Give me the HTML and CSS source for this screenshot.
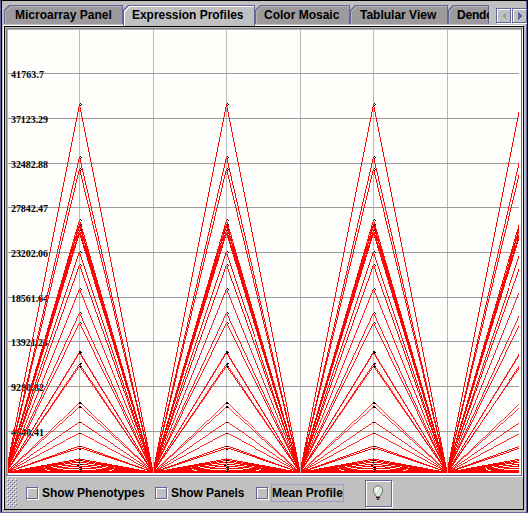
FILE: index.html
```
<!DOCTYPE html>
<html lang="en">
<head>
<meta charset="utf-8">
<title>Expression Profiles</title>
<link rel="stylesheet" href="styles.css">
</head>
<body>
<main class="window">
  <nav class="tabs">
    <button class="tab t1"><span>Microarray Panel</span></button>
    <button class="tab t2 active"><span>Expression Profiles</span></button>
    <button class="tab t3"><span>Color Mosaic</span></button>
    <button class="tab t4"><span>Tablular View</span></button>
    <button class="tab t5"><span>Dendc</span></button>
    <div class="scrolls">
      <button class="scroll" aria-label="Previous"><svg width="13" height="13" shape-rendering="crispEdges"><path d="M9 3V11L5 7Z" fill="#9c9a9c"/></svg></button>
      <button class="scroll" aria-label="Next"><svg width="13" height="13" shape-rendering="crispEdges"><path d="M5 3V11L9 7Z" fill="#63659c"/></svg></button>
    </div>
  </nav>
  <section class="panel">
    <div class="chart">
      <svg width="511" height="443" viewBox="8 30 511 443" shape-rendering="crispEdges">
        <defs>
          <pattern id="stripes" x="0" y="1" width="8" height="4" patternUnits="userSpaceOnUse">
            <path d="M0 .5H8" stroke="#fffbf0"/>
          </pattern>
          <g id="profiles">
            <g fill="none" stroke="#f00">
              <path stroke-width=".97" d="M6 472.500L79.500 104L153 472.500M6 472.500L79.500 157L153 472.500M6 472.500L79.500 169L153 472.500M6 472.500L79.500 220L153 472.500M6 472.500L79.500 224L153 472.500M6 472.500L79.500 226L153 472.500M6 472.500L79.500 230L153 472.500M6 472.500L79.500 233L153 472.500M6 472.500L79.500 252L153 472.500M6 472.500L79.500 265L153 472.500"/>
              <path stroke-width=".9" d="M6 472.500L79.500 289L153 472.500M6 472.500L79.500 313L153 472.500M6 472.500L79.500 323L153 472.500"/>
              <path stroke-width=".85" d="M6 472.500L79.500 352L153 472.500M6 472.500L79.500 353L153 472.500M6 472.500L79.500 364L153 472.500M6 472.500L79.500 366L153 472.500"/>
              <path stroke-width=".76" d="M6 472.500L79.500 403L153 472.500M6 472.500L79.500 407L153 472.500"/>
              <path stroke-width=".85" d="M6 472.500L79.500 422L153 472.500M6 472.500L79.500 433L153 472.500"/>
              <path stroke-width=".95" d="M6 472.500L79.500 446L153 472.500M6 472.500L79.500 448L153 472.500"/>
              <path d="M6 472.500L79.500 459L153 472.500M6 472.500L79.500 460.500L153 472.500M6 472.500L79.500 462L153 472.500M6 472.500L79.500 464L153 472.500M6 472.500L79.500 466L153 472.500M6 472.500L79.500 468L153 472.500M6 472.500L79.500 470L153 472.500M6 471.500H153M6 472.500H153"/>
            </g>
            <path fill="none" stroke="#000" d="M80 103.500H81M81 104.500H82M80 105.500H81M80 156.500H81M81 157.500H82M80 158.500H81M80 168.500H81M81 169.500H82M80 170.500H81M80 219.500H81M81 220.500H82M81 224.500H82M80 225.500H81M81 229.500H82M80 230.500H81M80 251.500H81M81 252.500H82M80 264.500H81M81 265.500H82M80 288.500H81M81 289.500H82M80 312.500H81M81 313.500H82M80 322.500H81M81 323.500H82M79 351.500H81M79 352.500H82M79 353.500H81M80 363.500H82M79 364.500H81M79 366.500H82M80 367.500H81M79 402.500H81M79 403.500H82M79 406.500H81M79 407.500H82M79 422.500H81M79 433.500H81M79 446.500H81M79 449.500H81M79 460.500H82M78 462.500H80M80 464.500H82M77 465.500H79M79 467.500H82M80 469.500H82M79 471.500H81"/>
          </g>
        </defs>
        <rect x="8" y="30" width="511" height="443" fill="#fff"/>
        <rect x="8" y="30" width="511" height="443" fill="url(#stripes)"/>
        <path stroke="#b8b8b8" d="M79.500 30V473M153.500 30V473M226.500 30V473M300.500 30V473M373.500 30V473M447.500 30V473"/>
        <path stroke="#9c9a9c" d="M8 73.500H519M8 118.500H519M8 163.500H519M8 207.500H519M8 252.500H519M8 297.500H519M8 341.500H519M8 386.500H519M8 431.500H519"/>
        <g class="axis">
          <text x="11" y="77.500" textLength="33">41763.7</text>
          <text x="11" y="122.500" textLength="37">37123.29</text>
          <text x="11" y="167.500" textLength="37">32482.88</text>
          <text x="11" y="211.500" textLength="37">27842.47</text>
          <text x="11" y="256.500" textLength="37">23202.06</text>
          <text x="11" y="301.500" textLength="37">18561.64</text>
          <text x="11" y="345.500" textLength="37">13921.23</text>
          <text x="11" y="390.500" textLength="33">9280.82</text>
          <text x="11" y="435.500" textLength="33">4640.41</text>
        </g>
        <use href="#profiles"/>
        <use href="#profiles" x="147"/>
        <use href="#profiles" x="294"/>
        <use href="#profiles" x="441"/>
        <path stroke="#b8b8b8" d="M153.500 466V473M300.500 466V473M447.500 466V473"/>
      </svg>
    </div>
    <footer class="toolbar">
      <svg class="grip" width="10" height="28" shape-rendering="crispEdges">
        <defs>
          <pattern id="grip" width="4" height="4" patternUnits="userSpaceOnUse">
            <path fill="#fff" d="M0 0h1v1h-1zM2 2h1v1h-1z"/>
            <path fill="#63659c" d="M1 1h1v1h-1zM3 3h1v1h-1z"/>
          </pattern>
        </defs>
        <rect width="10" height="28" fill="url(#grip)"/>
      </svg>
      <label class="check c1"><i></i><span>Show Phenotypes</span></label>
      <label class="check c2"><i></i><span>Show Panels</span></label>
      <label class="check c3 focused"><i></i><span>Mean Profile</span></label>
      <button class="bulb" aria-label="Show hints">
        <svg width="12" height="16" viewBox="0 0 12 16">
          <circle cx="6" cy="5.500" r="4.700" fill="#dbe8dc" stroke="#737573"/>
          <path d="M3 9L4 12H8L9 9Z" fill="#dbe8dc"/>
          <path d="M2.500 9L4 11.500M9.500 9L8 11.500" stroke="#737573"/>
          <path d="M3 3.500Q4 2 6 2V5L4 7Z" fill="#fff"/>
          <path d="M4 11H8V14H4Z" fill="#946b73"/>
          <path d="M4 12.500H8M5 14.500H7" stroke="#292429"/>
        </svg>
      </button>
    </footer>
  </section>
</main>
</body>
</html>
```
FILE: styles.css
```
* { box-sizing: border-box; }

body {
  margin: 0;
  font: bold 12px "Liberation Sans", sans-serif;
  color: #000;
}

button {
  padding: 0;
  border: 0;
  font: inherit;
  color: inherit;
}

.window {
  width: 528px;
  height: 513px;
  padding: 4px 0 0 3px;
  overflow: hidden;
  background: #c0c0c0;
  border: 1px solid #63659c;
  border-top-color: #000;
  border-right-color: #000;
  box-shadow: inset 1px 0 #000, inset -1px 0 #63659c;
}

.tabs {
  display: flex;
  height: 20px;
}

.tab {
  position: relative;
  isolation: isolate;
  flex: none;
  height: 19px;
  padding: 0 0 0 10px;
  text-align: left;
  background: #63659c;
  white-space: nowrap;
  overflow: hidden;
  clip-path: polygon(0 5px, 5px 0, 100% 0, 100% 100%, 0 100%);
}

.tab::before,
.tab::after {
  content: "";
  position: absolute;
  z-index: -1;
  inset: 1px 1px 0;
  background: #b5b2b5;
  clip-path: polygon(0 5px, 5px 0, 100% 0, 100% 100%, 0 100%);
}

.tab::after {
  inset: 2px 1px 0 2px;
  background: #9c9a9c;
}

.tab span {
  display: block;
  line-height: 19px;
  transform: translateY(1px);
}

.t1 { width: 119px; padding-left: 11px; }
.t2 { width: 132px; padding-left: 9px; letter-spacing: -.03px; }
.t3 { width: 95px; padding-left: 9px; }
.t4 { width: 98px; }
.t5 { width: 41px; padding-left: 9px; letter-spacing: -.2px; }

.tab.active { height: 21px; z-index: 1; }
.active::before { background: #fff; }
.active::after { background: #c0c0c0; }
.tab.active span { transform: none; }

.scrolls {
  display: flex;
  gap: 1px;
  margin: 3px 0 0 7px;
}

.scroll {
  width: 15px;
  height: 15px;
  background: #c0c0c0;
  border: 1px solid #63659c;
  box-shadow: inset 1px 1px #fff, 1px 1px #fff;
}

.scroll svg { display: block; }

.panel {
  width: 520px;
  height: 484px;
  margin-top: 1px;
  padding: 1px 0 0 1px;
  border: 1px solid #000;
  background: #c0c0c0;
  box-shadow: -1px -1px #fff;
}

.chart {
  width: 516px;
  height: 448px;
  padding: 1px;
  background: #fff;
  border: 1px solid #63659c;
  border-top-color: #848284;
  border-left-color: #848284;
  box-shadow: inset 1px 1px #b5b2b5, 1px 1px #fff;
}

.chart svg { display: block; }

.axis {
  font: bold 10px "Liberation Serif", serif;
}

.toolbar {
  display: flex;
  align-items: center;
  height: 32px;
  margin: 1px 0 0 1px;
}

.grip { flex: none; }

.check {
  display: flex;
  align-items: center;
  white-space: nowrap;
  letter-spacing: -.05px;
}

.check i {
  width: 12px;
  height: 12px;
  border: 1px solid #63659c;
  box-shadow: 1px 1px #fff, inset 1px 1px #fff;
}

.check span {
  height: 18px;
  margin-left: 3px;
  padding: 0 1px;
  line-height: 18px;
}

.c1 { width: 129px; margin-left: 9px; }
.c2 { width: 101px; }

.focused span { outline: 1px solid #9c9ace; outline-offset: -1px; }

.bulb {
  display: grid;
  place-items: center;
  width: 27px;
  height: 27px;
  margin-left: 21px;
  background: #c0c0c0;
  border: 1px solid #63659c;
  box-shadow: inset 1px 1px #fff, 1px 1px #fff;
}
```
